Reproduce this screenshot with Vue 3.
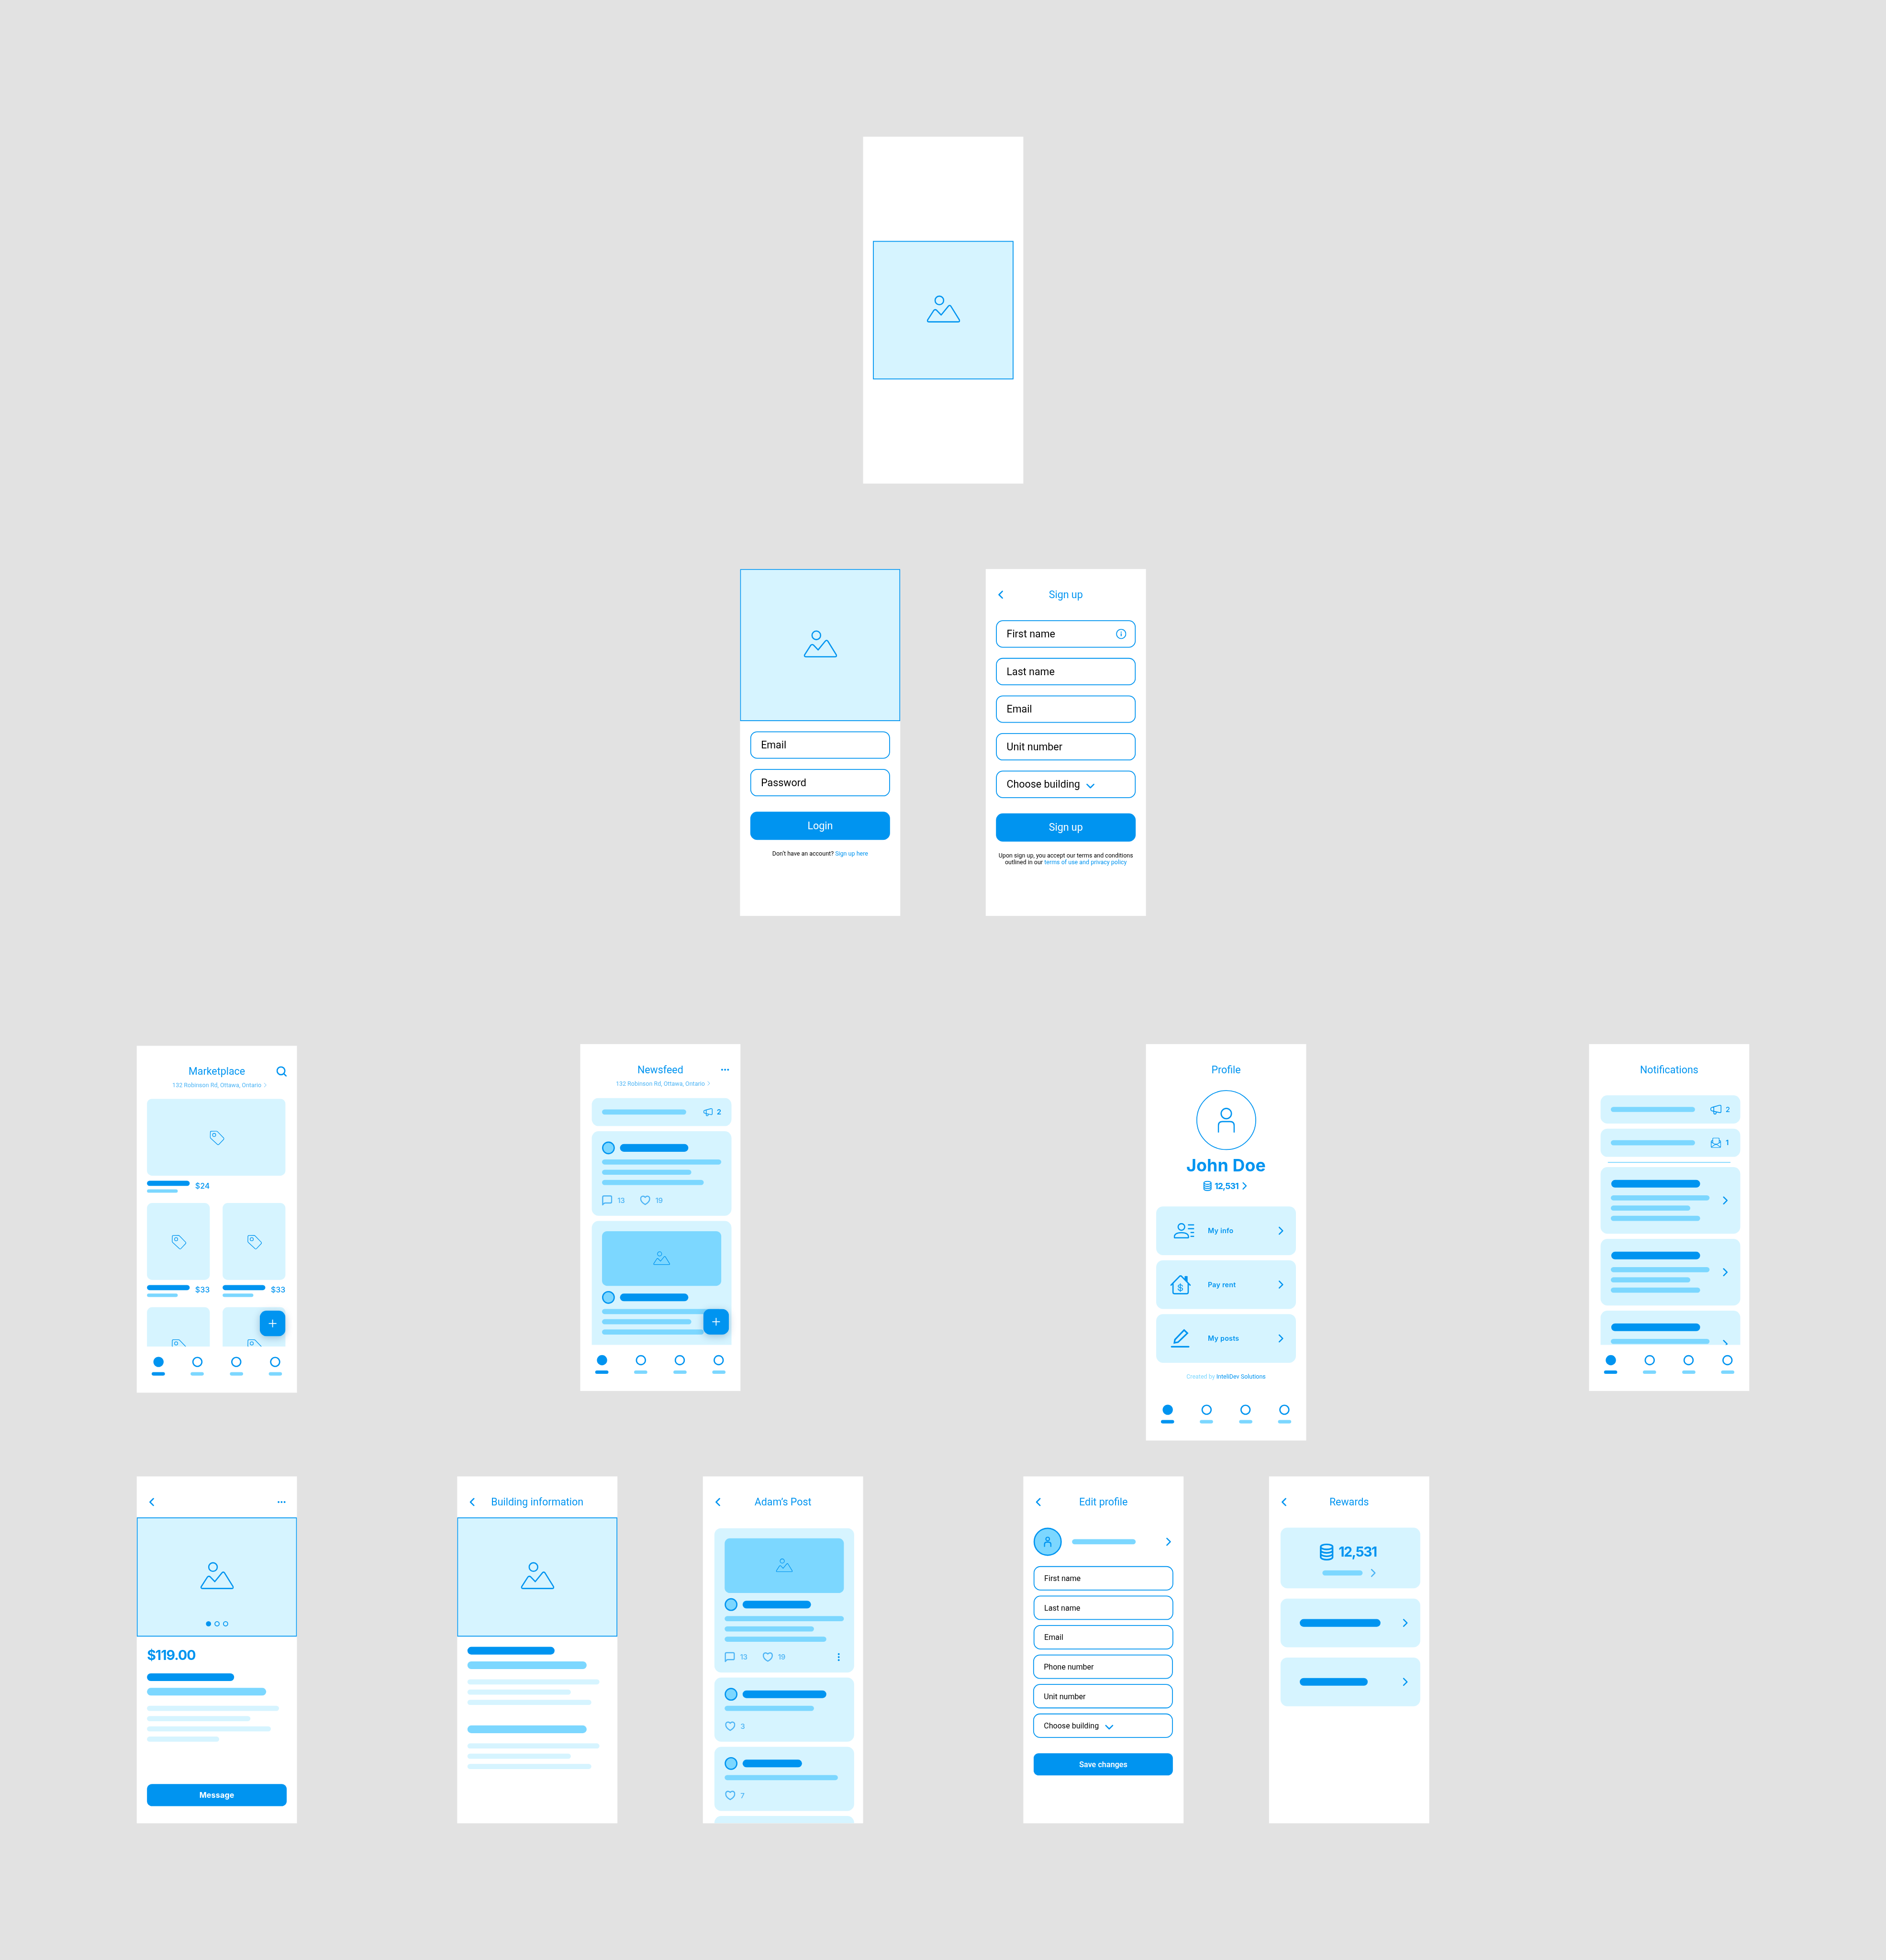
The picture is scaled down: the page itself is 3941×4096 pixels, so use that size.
<script setup>
const screens = {
  splash: { left: '2020px', top: '320px' },
  login: { left: '1732px', top: '1332px' },
  signup: { left: '2307px', top: '1332px' },
  market: { left: '320px', top: '2448px' },
  news: { left: '1358px', top: '2444px' },
  profile: { left: '2682px', top: '2444px' },
  notif: { left: '3719px', top: '2444px' },
  item: { left: '320px', top: '3456px' },
  building: { left: '1070px', top: '3456px' },
  post: { left: '1645px', top: '3456px' },
  edit: { left: '2395px', top: '3456px' },
  rewards: { left: '2970px', top: '3456px' }
}

const address = '132 Robinson Rd, Ottawa, Ontario'
const products = [
  { price: '$24', wide: true },
  { price: '$33' },
  { price: '$33' },
  {},
  {}
]
const feed = [{ counts: true }, { picture: true }]
const textLines = [279, 209, 238]
const menu = [
  { label: 'My info', icon: 'contact' },
  { label: 'Pay rent', icon: 'house' },
  { label: 'My posts', icon: 'pencil' }
]
const noticeLines = [231, 186, 209]
const replies = [
  { name: 196, line: 209, likes: '3' },
  { name: 139, line: 265, likes: '7' }
]
const signupFields = ['First name', 'Last name', 'Email', 'Unit number', 'Choose building']
const editFields = ['First name', 'Last name', 'Email', 'Phone number', 'Unit number', 'Choose building']
const w = (n) => ({ width: n + 'px' })
</script>

<template>
  <div class="window">
    <svg class="defs" aria-hidden="true">
      <symbol id="i-back" viewBox="0 0 24 24"><path d="M15 4 7 12l8 8" stroke-width="3" /></symbol>
      <symbol id="i-next" viewBox="0 0 24 24"><path d="m9 4 8 8-8 8" stroke-width="2.8" /></symbol>
      <symbol id="i-down" viewBox="0 0 24 24"><path d="m4 10 8 8 8-8" stroke-width="2.8" /></symbol>
      <symbol id="i-tiny" viewBox="0 0 8 12"><path d="M1.500 1.500 6 6l-4.500 4.500" stroke-width="1.100" /></symbol>
      <symbol id="i-dots" viewBox="0 0 24 24"><g fill="currentColor" stroke="none"><circle cx="5" cy="12" r="2.200" /><circle cx="12" cy="12" r="2.200" /><circle cx="19" cy="12" r="2.200" /></g></symbol>
      <symbol id="i-search" viewBox="0 0 24 24"><circle cx="10.600" cy="10.600" r="9.100" stroke-width="3" /><path d="m17.200 17.200 5.500 5.500" stroke-width="3" /></symbol>
      <symbol id="i-info" viewBox="0 0 24 24"><circle cx="12" cy="12" r="10.900" stroke-width="2" /><path d="M12 10.600v6.600M12 6.600v2.100" stroke-width="2.400" stroke-linecap="butt" /></symbol>
      <symbol id="i-image" viewBox="0 0 78 64"><circle cx="29.500" cy="12.200" r="10" stroke-width="2.900" /><path d="M5 62.400H73.500C76.500 62.400 77.600 60 76.200 57.700L56.400 25.700Q53.600 22.300 50.500 25.700L33.700 46.300 22.800 34.900Q19.500 32.500 16.500 35.500L2.200 57.700C.8 60 2 62.400 5 62.400Z" stroke-width="2.900" /></symbol>
      <symbol id="i-tag" viewBox="0 0 34 34"><path d="M3.500 1 15 .9Q17 .9 18.300 2.200L32.300 16.700Q34 18.500 32.300 20.200L21.300 31.800Q19.500 33.600 17.700 31.800L2.200 17.500Q1 16.300 1 14.700L1.300 3.500Q1.300 1.100 3.500 1Z" stroke-width="1.500" /><circle cx="10.200" cy="9.700" r="3.700" stroke-width="1.500" /></symbol>
      <symbol id="i-mega" viewBox="0 0 26 23"><path d="M8 5 21.500 1.200Q25 .8 25 4V15.500Q25 19 21.500 18.400L8 15.300 3.500 14.200Q1 13.500 1 11.500V9Q1 7 3.500 6.300ZM8 5V15.300M8 15.300V19.300Q8 21.800 10.800 21.800 13.400 21.800 13.400 19V16.800" stroke-width="1.900" /></symbol>
      <symbol id="i-mail" viewBox="0 0 24 24"><path d="M4.500 6.800Q.8 7.200.8 9.800V20.500Q.8 23.200 3.500 23.200H20.500Q23.200 23.200 23.200 20.500V9.800Q23.200 7.200 19.600 6.800M4.500 12.200V3Q4.500.8 6.700.8H17.400Q19.600.8 19.600 3V12.200M1 10.500 12 16.600 23 10.500M1.200 22.200 12 14.600 22.800 22.200" stroke-width="1.500" /></symbol>
      <symbol id="i-comment" viewBox="0 0 24 24"><path d="M1.500 22.300V4.500Q1.500 1.500 4.500 1.500H19.500Q22.500 1.500 22.500 4.500V15Q22.500 18 19.500 18H7.500Q4.500 18 1.500 22.300Z" stroke-width="2.800" /></symbol>
      <symbol id="i-heart" viewBox="0 0 24 24"><path d="M12 4.800C10 2.200 7.600 1.900 6 2.200 3 2.800 1.500 5.500 1.500 8.300 1.500 14 7 18.800 12 21.500 17 18.800 22.500 14 22.500 8.300 22.500 5.500 21 2.800 18 2.200 16.400 1.900 14 2.200 12 4.800Z" stroke-width="2.700" /></symbol>
      <symbol id="i-person" viewBox="0 0 40 59"><circle cx="20" cy="13.700" r="12" stroke-width="3" /><path d="M1.500 58V42Q1.500 32.500 11 32.500H29Q38.500 32.500 38.500 42V58" stroke-width="3" stroke-linecap="butt" /></symbol>
      <symbol id="i-user" viewBox="0 0 18 24"><circle cx="9" cy="5.500" r="4.200" stroke-width="2.600" /><path d="M1.500 23V18.500Q1.500 13 7 13H11Q16.500 13 16.500 18.500V23" stroke-width="2.800" /></symbol>
      <symbol id="i-coins" viewBox="0 0 32 40"><path d="M30 8C30 11.300 23.700 14 16 14S2 11.300 2 8 8.300 2 16 2 30 4.700 30 8ZM2 8V32C2 35.300 8.300 38 16 38S30 35.300 30 32V8M2 16C2 19.300 8.300 22 16 22S30 19.300 30 16M2 24C2 27.300 8.300 30 16 30S30 27.300 30 24" stroke-width="3.800" /></symbol>
      <symbol id="i-contact" viewBox="0 0 48 36"><circle cx="18" cy="9" r="7.700" stroke-width="2.800" /><path d="M1.400 33Q1.400 22.500 18 22.500T34.600 33Q34.600 34.600 33 34.600H3Q1.400 34.600 1.400 33Z" stroke-width="2.800" /><path d="M34.400 4.200H46.800M34.400 13.200H46.800M40.400 22.200H46.800M40.400 31.200H46.800" stroke-width="2.800" /></symbol>
      <symbol id="i-house" viewBox="0 0 48 45"><path d="M1.500 23.300 22 2.300Q24 .8 26 2.300L46.500 23.300M6.300 19V40Q6.300 43.300 9.600 43.300H38.600Q41.900 43.300 41.900 40V19" stroke-width="3" /><path d="M34.500 10V3H39.500V15" stroke-width="2" fill="currentColor" /><path d="M28.500 25.800C28 23.500 26 22.500 23.500 22.500 20.500 22.500 18.500 23.900 18.500 26 18.500 31 28.800 27.600 28.800 32.300 28.800 34.500 26.500 35.800 23.500 35.800 20.500 35.800 18.500 34.500 18.200 32M23.500 19.800V38.200" stroke-width="1.900" /></symbol>
      <symbol id="i-pencil" viewBox="0 0 44 44"><path d="M8.500 32.300 9.800 24.800 31.300 2.500 39 9.800 17.200 30.800Z" stroke-width="3.600" stroke-linejoin="miter" /><path d="M2 41.400H42" stroke-width="3.800" /></symbol>
    </svg>

    <div class="board">
      <section class="phone splash" :style="screens.splash">
        <div class="photo"><svg class="pic"><use href="#i-image" /></svg></div>
      </section>

      <section class="phone login" :style="screens.login">
        <div class="photo"><svg class="pic"><use href="#i-image" /></svg></div>
        <div class="form">
          <div class="field">Email</div>
          <div class="field">Password</div>
        </div>
        <div class="button big">Login</div>
        <p class="legal">Don’t have an account? <a>Sign up here</a></p>
      </section>

      <section class="phone" :style="screens.signup">
        <header class="head"><svg class="i24"><use href="#i-back" /></svg><h2>Sign up</h2></header>
        <div class="form first">
          <div v-for="(f, i) in signupFields" :key="f" class="field">
            <span>{{ f }}</span>
            <svg v-if="i === 0" class="i24 info"><use href="#i-info" /></svg>
            <svg v-if="i === 4" class="i24 drop"><use href="#i-down" /></svg>
          </div>
        </div>
        <div class="button big">Sign up</div>
        <p class="legal">Upon sign up, you accept our terms and conditions<br>outlined in our <a>terms of use and privacy policy</a></p>
      </section>

      <section class="phone market" :style="screens.market">
        <header class="head"><h2>Marketplace</h2><svg class="i24"><use href="#i-search" /></svg></header>
        <div class="address"><span>{{ address }}</span><svg class="tiny"><use href="#i-tiny" /></svg></div>
        <div class="scroll products">
          <div v-for="(p, i) in products" :key="i" class="product" :class="{ wide: p.wide }">
            <div class="thumb"><svg class="tag"><use href="#i-tag" /></svg></div>
            <div v-if="p.price" class="meta">
              <div><i class="bar name"></i><i class="bar sub"></i></div>
              <span class="price">{{ p.price }}</span>
            </div>
          </div>
        </div>
        <nav class="nav"><span v-for="n in 4" :key="n" :class="{ on: n === 1 }"><i></i><b></b></span></nav>
        <div class="fab"></div>
      </section>

      <section class="phone news" :style="screens.news">
        <header class="head"><h2>Newsfeed</h2><svg class="i24"><use href="#i-dots" /></svg></header>
        <div class="address"><span>{{ address }}</span><svg class="tiny"><use href="#i-tiny" /></svg></div>
        <div class="scroll cards">
          <div class="card strip"><i class="bar" :style="w(197)"></i><svg class="mega small"><use href="#i-mega" /></svg><span class="count">2</span></div>
          <div v-for="(f, i) in feed" :key="i" class="card" :class="{ last: !f.counts }">
            <div v-if="f.picture" class="cover"><svg class="pic"><use href="#i-image" /></svg></div>
            <div class="author"><i class="avatar"></i><i class="bar dark" :style="w(160)"></i></div>
            <i v-for="l in textLines" :key="l" class="bar line" :style="w(l)"></i>
            <div v-if="f.counts" class="actions">
              <svg class="i24"><use href="#i-comment" /></svg><span>13</span>
              <svg class="i24"><use href="#i-heart" /></svg><span>19</span>
            </div>
          </div>
        </div>
        <nav class="nav"><span v-for="n in 4" :key="n" :class="{ on: n === 1 }"><i></i><b></b></span></nav>
        <div class="fab"></div>
      </section>

      <section class="phone profile" :style="screens.profile">
        <header class="head"><h2>Profile</h2></header>
        <div class="portrait"><svg><use href="#i-person" /></svg></div>
        <h1>John Doe</h1>
        <div class="points"><svg class="coins"><use href="#i-coins" /></svg><span>12,531</span><svg class="go"><use href="#i-next" /></svg></div>
        <div class="menu">
          <div v-for="m in menu" :key="m.label" class="entry">
            <div class="glyph"><svg :class="m.icon"><use :href="'#i-' + m.icon" /></svg></div>
            <span>{{ m.label }}</span>
            <svg class="i24"><use href="#i-next" /></svg>
          </div>
        </div>
        <p class="credit">Created by <b>InteliDev Solutions</b></p>
        <nav class="nav"><span v-for="n in 4" :key="n" :class="{ on: n === 1 }"><i></i><b></b></span></nav>
      </section>

      <section class="phone notif" :style="screens.notif">
        <header class="head"><h2>Notifications</h2></header>
        <div class="scroll cards">
          <div class="card strip"><i class="bar" :style="w(197)"></i><svg class="mega"><use href="#i-mega" /></svg><span class="count thin">2</span></div>
          <div class="card strip"><i class="bar" :style="w(197)"></i><svg class="mail"><use href="#i-mail" /></svg><span class="count one">1</span></div>
          <hr>
          <div v-for="n in 3" :key="n" class="card notice">
            <div><i class="bar dark" :style="w(208)"></i><i v-for="l in noticeLines" :key="l" class="bar line" :style="w(l)"></i></div>
            <svg class="i24"><use href="#i-next" /></svg>
          </div>
        </div>
        <nav class="nav"><span v-for="n in 4" :key="n" :class="{ on: n === 1 }"><i></i><b></b></span></nav>
      </section>

      <section class="phone item" :style="screens.item">
        <header class="head"><svg class="i24"><use href="#i-back" /></svg><h2></h2><svg class="i24"><use href="#i-dots" /></svg></header>
        <div class="photo"><svg class="pic"><use href="#i-image" /></svg><div class="pager"><i class="on"></i><i></i><i></i></div></div>
        <div class="detail">
          <strong>$119.00</strong>
          <i class="bar dark" :style="w(204)"></i>
          <i class="bar mid" :style="w(279)"></i>
          <div class="pale"><i v-for="l in [309, 242, 290, 169]" :key="l" class="bar" :style="w(l)"></i></div>
        </div>
        <div class="button message">Message</div>
      </section>

      <section class="phone building" :style="screens.building">
        <header class="head"><svg class="i24"><use href="#i-back" /></svg><h2>Building information</h2></header>
        <div class="photo"><svg class="pic"><use href="#i-image" /></svg></div>
        <div class="detail">
          <i class="bar dark" :style="w(204)"></i>
          <i class="bar mid" :style="w(279)"></i>
          <div class="pale"><i v-for="l in [309, 242, 290]" :key="l" class="bar" :style="w(l)"></i></div>
          <i class="bar mid second" :style="w(279)"></i>
          <div class="pale"><i v-for="l in [309, 242, 290]" :key="l" class="bar" :style="w(l)"></i></div>
        </div>
      </section>

      <section class="phone post" :style="screens.post">
        <header class="head"><svg class="i24"><use href="#i-back" /></svg><h2>Adam’s Post</h2></header>
        <div class="scroll cards">
          <div class="card">
            <div class="cover"><svg class="pic"><use href="#i-image" /></svg></div>
            <div class="author"><i class="avatar"></i><i class="bar dark" :style="w(160)"></i></div>
            <i v-for="l in textLines" :key="l" class="bar line" :style="w(l)"></i>
            <div class="actions">
              <svg class="i24"><use href="#i-comment" /></svg><span>13</span>
              <svg class="i24"><use href="#i-heart" /></svg><span>19</span>
              <svg class="i24 more"><use href="#i-dots" /></svg>
            </div>
          </div>
          <div v-for="(r, i) in replies" :key="i" class="card">
            <div class="author"><i class="avatar"></i><i class="bar dark" :style="w(r.name)"></i></div>
            <i class="bar line" :style="w(r.line)"></i>
            <div class="actions reply"><svg class="i24"><use href="#i-heart" /></svg><span>{{ r.likes }}</span></div>
          </div>
          <div class="card"></div>
        </div>
      </section>

      <section class="phone edit" :style="screens.edit">
        <header class="head"><svg class="i24"><use href="#i-back" /></svg><h2>Edit profile</h2></header>
        <div class="who"><div class="face"><svg><use href="#i-user" /></svg></div><i class="bar" :style="w(149)"></i><svg class="i24"><use href="#i-next" /></svg></div>
        <div class="form compact">
          <div v-for="(f, i) in editFields" :key="f" class="field" :class="{ nudge: i > 2 }">
            <span>{{ f }}</span>
            <svg v-if="i === 5" class="i24 drop"><use href="#i-down" /></svg>
          </div>
        </div>
        <div class="button save">Save changes</div>
      </section>

      <section class="phone rewards" :style="screens.rewards">
        <header class="head"><svg class="i24"><use href="#i-back" /></svg><h2>Rewards</h2></header>
        <div class="cards">
          <div class="card total">
            <div class="sum"><svg><use href="#i-coins" /></svg><strong>12,531</strong></div>
            <div class="hint"><i class="bar" :style="w(94)"></i><svg class="i24"><use href="#i-next" /></svg></div>
          </div>
          <div v-for="l in [189, 159]" :key="l" class="card reward"><i class="bar dark" :style="w(l)"></i><svg class="i24"><use href="#i-next" /></svg></div>
        </div>
      </section>
    </div>
  </div>
</template>

<style>
body { background: #e2e2e2; }
</style>

<style scoped>
.window { width: 3941px; height: 4096px; overflow: hidden; background: #e2e2e2; }
.defs { position: absolute; width: 0; height: 0; }
.board {
  --blue: #0094f0; --light: #7cd7ff; --pale: #d6f4ff; --soft: #4db4f5;
  position: relative; width: 4414px; height: 4588px;
  transform: scale(.89284, .89276); transform-origin: 0 0;
  font-family: Roboto, "Noto Sans", sans-serif; color: #000;
}
.board * { box-sizing: border-box; }
svg { display: block; flex: none; color: inherit; }
symbol { fill: none; stroke: currentColor; stroke-linecap: round; stroke-linejoin: round; overflow: visible; }
.phone {
  position: absolute; width: 375px; height: 812px; background: #fff; color: var(--blue);
  display: flex; flex-direction: column; overflow: hidden;
}
.profile { height: 928px; }

.i24 { width: 24px; height: 24px; }
.head { display: grid; grid-template-columns: 24px 1fr 24px; height: 24px; margin: 48px 24px 0; flex: none; }
.head h2 { grid-column: 2; grid-row: 1; margin: 0 -30px; font-size: 24px; line-height: 24px; font-weight: 400; text-align: center; white-space: nowrap; }
.head h2 + .i24 { grid-column: 3; }
.address { display: flex; justify-content: center; align-items: center; gap: 5px; height: 16px; margin-top: 12px; padding-left: 13px; font-size: 14px; line-height: 16px; color: var(--soft); flex: none; }
.tiny { width: 8px; height: 12px; }

.photo { height: 279px; flex: none; border: 2px solid var(--blue); background: var(--pale); display: flex; flex-direction: column; align-items: center; justify-content: center; }
.pic { width: 78px; height: 64px; margin-bottom: 7px; }
.splash .photo { width: 329px; height: 324px; margin: 244px 0 0 23px; }
.login .photo { height: 356px; }

.form { display: flex; flex-direction: column; gap: 24px; margin: 24px 24px 0; }
.form.first { margin-top: 48px; }
.field { display: flex; align-items: center; height: 64px; padding: 0 20px 0 23px; border: 2px solid var(--blue); border-radius: 16px; font-size: 24px; line-height: 28px; color: #000; }
.field svg { color: var(--blue); }
.info { margin-left: auto; }
.drop { margin: 3px 0 0 12px; }
.button { display: flex; align-items: center; justify-content: center; background: var(--blue); color: #fff; margin: 36px 24px 0; flex: none; }
.big { height: 66px; border-radius: 16px; font-size: 24px; }
.legal { margin: 24px 0 0; font-size: 14px; line-height: 16px; text-align: center; color: #000; white-space: nowrap; }
.legal a { color: var(--blue); }
.compact { gap: 12px; }
.compact .field { height: 57px; font-size: 18px; }
.compact .nudge { margin: 0 1px 0 -1px; }

.bar { display: block; height: 12px; border-radius: 9px; background: var(--light); flex: none; }
.dark { height: 18px; background: var(--blue); }
.mid { height: 18px; }

.scroll { flex: 1; min-height: 0; overflow: hidden; }
.products { display: grid; grid-template-columns: 147px 147px; column-gap: 30px; row-gap: 24px; align-content: start; padding: 0 24px; margin-top: 24px; }
.wide { grid-column: 1 / 3; }
.thumb { height: 180px; border-radius: 12px; background: var(--pale); display: flex; align-items: center; justify-content: center; }
.tag { width: 34px; height: 34px; margin: 3px 0 0 3px; }
.meta { display: flex; justify-content: space-between; width: 147px; height: 28px; margin-top: 12px; }
.name { width: 100px; background: var(--blue); }
.sub { width: 72px; height: 8px; margin-top: 8px; }
.price { font: 500 18px/23px Inter, sans-serif; }

.nav { display: flex; justify-content: space-between; height: 108px; padding: 24px 35px 0; flex: none; margin-top: auto; }
.nav span { width: 31px; display: flex; flex-direction: column; align-items: center; gap: 12px; }
.nav i { width: 24px; height: 24px; border-radius: 50%; border: 3px solid var(--blue); }
.nav b { width: 31px; height: 8px; border-radius: 4px; background: var(--light); }
.nav .on i, .nav .on b { background: var(--blue); }
.fab {
  position: absolute; right: 27px; bottom: 132px; width: 60px; height: 60px; border-radius: 16px;
  background: linear-gradient(#fff, #fff) center / 18px 2px no-repeat, linear-gradient(#fff, #fff) center / 2px 18px no-repeat, var(--blue);
  box-shadow: 0 4px 18px rgba(0, 60, 110, .27);
}

.cards { display: flex; flex-direction: column; gap: 12px; padding: 0 21px 0 27px; margin-top: 48px; }
.news .cards { margin-top: 26px; }
.post .cards { margin-top: 49px; }
.card { border-radius: 16px; background: var(--pale); padding: 24px; flex: none; }
.last { padding-bottom: 72px; }
.strip { display: flex; align-items: center; height: 66px; }
.count { width: 20px; text-align: right; font: 600 17px/24px Inter, sans-serif; }
.thin { font-weight: 500; }
.one { padding-right: 3px; }
.mega { width: 26px; height: 23px; margin-left: auto; }
.mega.small { width: 22px; height: 19px; }
.mail { width: 24px; height: 24px; margin: 0 1px 0 auto; }
.author { display: flex; align-items: center; gap: 12px; }
.avatar { width: 30px; height: 30px; border-radius: 50%; border: 3px solid var(--blue); background: var(--light); }
.line { margin-top: 12px; }
.actions { display: flex; align-items: center; margin-top: 24px; color: var(--soft); font: 500 17px/24px Inter, sans-serif; letter-spacing: -.02em; }
.actions span { width: 53px; padding-left: 12px; }
.actions svg + span + svg { margin-left: 12px; }
.actions .more { margin-left: auto; transform: rotate(90deg); color: var(--blue); }
.reply { padding-left: 1px; }
.cover { height: 128px; margin-bottom: 12px; border-radius: 12px; background: var(--light); display: flex; align-items: center; justify-content: center; }
.cover .pic { width: 39px; height: 32px; margin-bottom: 3px; }

.portrait { align-self: center; width: 140px; height: 140px; margin: 36px 0 0 1px; border: 2px solid var(--blue); border-radius: 50%; display: flex; align-items: center; justify-content: center; }
.portrait svg { width: 40px; height: 59px; }
.profile h1 { margin: 12px 0 0; font: 700 40px/48px Inter, sans-serif; letter-spacing: .2px; text-align: center; white-space: nowrap; }
.points { display: flex; align-items: center; justify-content: center; height: 24px; margin-top: 12px; font: 700 20px/24px Inter, sans-serif; letter-spacing: -.055em; }
.points .coins { width: 20px; height: 24px; margin-right: 7px; }
.go { width: 22px; height: 22px; margin-left: 3px; }
.menu { display: flex; flex-direction: column; gap: 12px; margin: 36px 24px 0; }
.entry { display: flex; align-items: center; height: 114px; padding-right: 24px; border-radius: 16px; background: var(--pale); font: 600 16px/24px Inter, sans-serif; letter-spacing: .25px; }
.entry span { flex: 1; }
.glyph { width: 121px; padding-left: 33px; }
.contact { width: 48px; height: 36px; margin-left: 8px; }
.house { width: 48px; height: 45px; }
.pencil { width: 44px; height: 44px; margin-left: 1px; }
.credit { margin: 24px 0 0; font: 400 14px/16px Roboto, sans-serif; text-align: center; color: var(--light); }
.credit b { font-weight: 400; color: var(--blue); }

.notif hr { width: 287px; height: 2px; margin: 0 0 -2px 17px; border: 0; background: var(--light); flex: none; }
.notice { display: flex; align-items: center; justify-content: space-between; height: 156px; }
.notice .dark { margin: 0 0 18px 1px; }
.notice .dark + .line { margin-top: 0; }

.item .head + .photo, .building .head + .photo { margin-top: 24px; }
.item .photo { position: relative; }
.pager { position: absolute; left: 0; right: -1px; bottom: 22px; display: flex; justify-content: center; gap: 8px; }
.pager i { width: 12px; height: 12px; border: 2px solid var(--blue); border-radius: 50%; }
.pager .on { background: var(--blue); }
.detail { padding: 24px 24px 0; }
.detail strong { display: block; margin-bottom: 23px; font: 700 32px/39px Inter, sans-serif; letter-spacing: -.035em; }
.detail .mid { margin-top: 16px; }
.detail .second { margin-top: 48px; }
.pale { display: flex; flex-direction: column; gap: 12px; margin-top: 24px; }
.pale .bar { background: var(--pale); }
.message { height: 52px; border-radius: 12px; margin: auto 24px 40px; font: 700 18px/24px Inter, sans-serif; letter-spacing: .2px; }

.who { display: flex; align-items: center; height: 66px; margin: 48px 24px 0; }
.face { width: 66px; height: 66px; margin-right: 24px; border: 3px solid var(--blue); border-radius: 50%; background: var(--light); display: flex; align-items: center; justify-content: center; }
.face svg { width: 18px; height: 24px; }
.who .i24 { margin-left: auto; }
.save { height: 52px; width: 326px; border-radius: 12px; font-size: 18px; font-weight: 500; letter-spacing: .1px; }

.rewards .cards { gap: 24px; }
.total { height: 142px; padding: 37px 0 0; }
.sum { display: flex; align-items: center; padding-left: 92px; }
.sum svg { width: 32px; height: 40px; margin-right: 12px; }
.sum strong { font: 700 32px/40px Inter, sans-serif; letter-spacing: -.055em; }
.hint { display: flex; align-items: center; gap: 12px; margin-top: 17px; padding-left: 98px; }
.hint .i24 { color: var(--soft); }
.reward { display: flex; align-items: center; justify-content: space-between; height: 114px; padding: 0 24px 0 45px; }
</style>
